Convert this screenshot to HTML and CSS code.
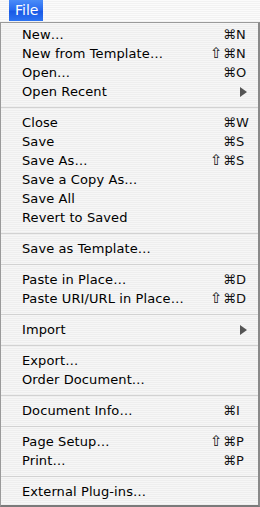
FILE: index.html
```html
<!DOCTYPE html>
<html lang="en">
<head>
  <meta charset="UTF-8">
  <meta name="viewport" content="width=device-width, initial-scale=1.0">
  <title>File Menu</title>
  <link rel="stylesheet" href="styles.css">
</head>
<body>
  <div class="menubar">
    <span class="menu-title active">File</span>
  </div>

  <div class="menu">
    <div class="item"><span class="label">New…</span><span class="mod"></span><span class="key">⌘N</span></div>
    <div class="item"><span class="label">New from Template…</span><span class="mod">⇧</span><span class="key">⌘N</span></div>
    <div class="item"><span class="label">Open…</span><span class="mod"></span><span class="key">⌘O</span></div>
    <div class="item"><span class="label">Open Recent</span><span class="mod"></span><span class="key"><i class="arrow"></i></span></div>

    <div class="sep"></div>

    <div class="item"><span class="label">Close</span><span class="mod"></span><span class="key">⌘W</span></div>
    <div class="item"><span class="label">Save</span><span class="mod"></span><span class="key">⌘S</span></div>
    <div class="item"><span class="label">Save As…</span><span class="mod">⇧</span><span class="key">⌘S</span></div>
    <div class="item"><span class="label">Save a Copy As…</span></div>
    <div class="item"><span class="label">Save All</span></div>
    <div class="item"><span class="label">Revert to Saved</span></div>

    <div class="sep"></div>

    <div class="item"><span class="label">Save as Template…</span></div>

    <div class="sep"></div>

    <div class="item"><span class="label">Paste in Place…</span><span class="mod"></span><span class="key">⌘D</span></div>
    <div class="item"><span class="label">Paste URI/URL in Place…</span><span class="mod">⇧</span><span class="key">⌘D</span></div>

    <div class="sep"></div>

    <div class="item"><span class="label">Import</span><span class="mod"></span><span class="key"><i class="arrow"></i></span></div>

    <div class="sep"></div>

    <div class="item"><span class="label">Export…</span></div>
    <div class="item"><span class="label">Order Document…</span></div>

    <div class="sep"></div>

    <div class="item"><span class="label">Document Info…</span><span class="mod"></span><span class="key">⌘I</span></div>

    <div class="sep"></div>

    <div class="item"><span class="label">Page Setup…</span><span class="mod">⇧</span><span class="key">⌘P</span></div>
    <div class="item"><span class="label">Print…</span><span class="mod"></span><span class="key">⌘P</span></div>

    <div class="sep"></div>

    <div class="item"><span class="label">External Plug-ins…</span></div>
  </div>
</body>
</html>
```

FILE: styles.css
```css
body {
  margin: 0;
  width: 260px;
  height: 507px;
  font-family: "DejaVu Sans", "Liberation Sans", sans-serif;
  font-size: 13px;
  color: #000;
  background: #fff;
  overflow: hidden;
}

/* menu bar strip */
.menubar {
  height: 22px;
  padding-left: 9px;
  background: repeating-linear-gradient(to bottom, #fbfbfb 0, #fbfbfb 1px, #f2f2f2 1px, #f2f2f2 2px);
  display: flex;
}
.menu-title {
  padding: 0 6px;
  height: 21px;
  line-height: 21px;
  font-size: 14px;
}
.menu-title.active {
  width: 22px;
  color: #fff;
  background: linear-gradient(to bottom, #4a8cf8 0%, #2a6cf0 45%, #1a5ae6 55%, #2d74f2 100%);
}

/* the pull-down itself */
.menu {
  border: 1px solid #9a9a9a;
  border-right: 2px solid #8a8a8a;
  border-bottom: 2px solid #7a7a7a;
  padding: 2px 0 4px;
  background: repeating-linear-gradient(to bottom, #f6f6f6 0, #f6f6f6 1px, #eeeeee 1px, #eeeeee 2px);
}
.item {
  display: grid;
  grid-template-columns: 1fr 13px 23px;
  height: 19px;
  line-height: 19px;
  padding-left: 21px;
  padding-right: 12px;
  white-space: nowrap;
  letter-spacing: 0.1px;
}
.mod,
.key {
  font-size: 13px;
  color: #111;
  letter-spacing: 0;
}
.mod {
  font-size: 15px;
}
.key {
  display: flex;
  align-items: center;
}
.arrow {
  margin-left: 17px;
  width: 0;
  height: 0;
  border-top: 5px solid transparent;
  border-bottom: 5px solid transparent;
  border-left: 7px solid #555;
}
.sep {
  height: 12px;
  display: flex;
  align-items: center;
}
.sep::after {
  content: "";
  flex: 1;
  height: 1px;
  background: #d2d2d2;
}
```
